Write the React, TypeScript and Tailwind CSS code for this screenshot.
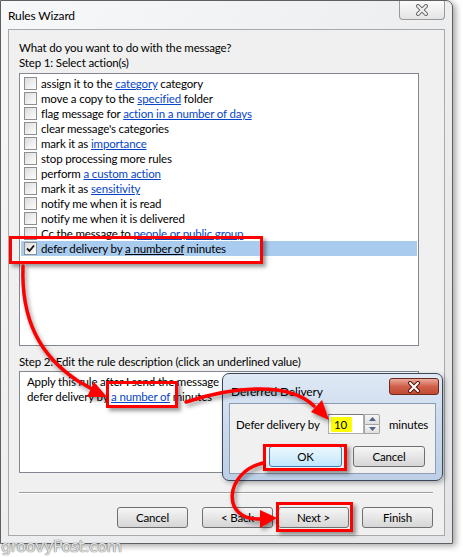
import React from 'react';

type Action = { pre: string; link?: string; post?: string; checked?: boolean };

const actions: Action[] = [
  { pre: 'assign it to the ', link: 'category', post: ' category' },
  { pre: 'move a copy to the ', link: 'specified', post: ' folder' },
  { pre: 'flag message for ', link: 'action in a number of days' },
  { pre: "clear message's categories" },
  { pre: 'mark it as ', link: 'importance' },
  { pre: 'stop processing more rules' },
  { pre: 'perform ', link: 'a custom action' },
  { pre: 'mark it as ', link: 'sensitivity' },
  { pre: 'notify me when it is read' },
  { pre: 'notify me when it is delivered' },
  { pre: 'Cc the message to ', link: 'people or public group' },
  { pre: 'defer delivery by ', link: 'a number of', post: ' minutes', checked: true },
];

function Checkbox({ checked }: { checked?: boolean }) {
  return (
    <span className="w-[13px] h-[13px] shrink-0 border border-[#8e8f8f] bg-gradient-to-br from-[#dcdcdc] to-white flex items-center justify-center">
      {checked && (
        <svg width="9" height="9" viewBox="0 0 9 9">
          <path d="M1 4.5 L3.5 7 L8 1.5" fill="none" stroke="#111" strokeWidth="1.8" />
        </svg>
      )}
    </span>
  );
}

function CloseGlyph({ light }: { light?: boolean }) {
  return (
    <svg width="14" height="12" viewBox="0 0 14 12">
      <path d="M3 2 L11 10 M11 2 L3 10" stroke={light ? '#5a1a10' : '#6e6e6e'} strokeWidth="4" strokeLinecap="round" />
      <path d="M3 2 L11 10 M11 2 L3 10" stroke={light ? '#ffffff' : '#f4f4f4'} strokeWidth="2" strokeLinecap="round" />
    </svg>
  );
}

function Button({ label, className = '' }: { label: string; className?: string }) {
  return (
    <div
      className={`h-[21px] w-[71px] rounded-[3px] border border-[#707070] bg-gradient-to-b from-[#f6f6f6] via-[#e6e6e6] to-[#d6d6d6] flex items-center justify-center text-black ${className}`}
    >
      {label}
    </div>
  );
}

function RedBox({ className }: { className: string }) {
  return (
    <div className={`absolute border-[3px] border-[#ff0000] shadow-[3px_3px_4px_rgba(0,0,0,0.4)] ${className}`} />
  );
}

export default function App() {
  return (
    <div className="relative w-[463px] h-[557px] bg-white overflow-hidden font-['Lato',sans-serif] text-[11.5px] tracking-[-0.15px] leading-[15px] text-black">
      {/* main window */}
      <div className="w-[453px] h-[544px] flex flex-col rounded-tr-[7px] border border-[#5f5f5f] bg-gradient-to-br from-[#f7f8f9] via-[#eceef0] to-[#e2e4e7] shadow-[3px_2px_6px_rgba(0,0,0,0.35)]">
        <div className="h-[28px] flex justify-between items-start">
          <span className="pl-[7px] pt-[7px] text-[12px]">Rules Wizard</span>
          <div className="mr-[7px] w-[46px] h-[19px] rounded-b-[4px] border border-t-0 border-[#9a9a9a] bg-gradient-to-b from-[#fbfbfb] to-[#e4e4e4] flex items-center justify-center">
            <CloseGlyph />
          </div>
        </div>

        <div className="mx-[7px] mb-[7px] flex-1 border border-[#a9a9a9] bg-[#f0f0f0] pl-[10px] pr-[11px] pt-[10px] flex flex-col">
          <div>What do you want to do with the message?</div>
          <div>Step 1: Select action(s)</div>

          <div className="mt-[3px] w-[400px] h-[273px] border border-[#828790] bg-white pt-[2px] px-[1px]">
            {actions.map((a, i) => (
              <div
                key={i}
                className={`h-[15px] flex items-center gap-[4px] pl-[3px] whitespace-nowrap ${a.checked ? 'bg-[#a9cbee]' : ''}`}
              >
                <Checkbox checked={a.checked} />
                <span>
                  {a.pre}
                  {a.link && (
                    <span className={a.checked ? 'underline text-black' : 'underline text-[#0645c8]'}>{a.link}</span>
                  )}
                  {a.post}
                </span>
              </div>
            ))}
          </div>

          <div className="mt-[8px]">Step 2: Edit the rule description (click an underlined value)</div>
          <div className="mt-[2px] w-[400px] h-[102px] border border-[#828790] bg-white pl-[7px] pt-[2px]">
            <div>Apply this rule after I send the message</div>
            <div>
              defer delivery by <span className="underline text-[#0645c8]">a number of</span> minutes
            </div>
          </div>

          <div className="mt-[19px] w-[414px] h-[2px] border-t border-[#a0a0a0] border-b border-b-white" />

          <div className="mt-[13px] flex">
            <Button label="Cancel" className="ml-[98px]" />
            <Button label="< Back" className="ml-[14px]" />
            <Button label="Next >" className="ml-[5px]" />
            <Button label="Finish" className="ml-[13px]" />
          </div>
        </div>
      </div>

      {/* watermark */}
      <div className="absolute left-[1px] top-[538px] font-['DejaVu_Sans',sans-serif] text-[16px] leading-[18px] tracking-[-0.5px] text-[#e0e0e0] [text-shadow:0_0_1px_#707070,0_0_1px_#707070]">
        groovyPost.com
      </div>

      {/* Deferred Delivery dialog */}
      <div className="absolute left-[222px] top-[373px] w-[221px] h-[108px] rounded-[7px] border border-[#39475a] bg-gradient-to-b from-[#dfe9f5] via-[#cad9ec] to-[#bccfe6] shadow-[2px_2px_5px_rgba(0,0,0,0.3)] flex flex-col">
        <div className="h-[29px] flex justify-between items-start">
          <span className="pl-[8px] pt-[10px] text-[12px]">Deferred Delivery</span>
          <div className="mt-[4px] mr-[3px] w-[50px] h-[17px] rounded-[3px] border border-[#6b2a1c] bg-gradient-to-b from-[#e9a99a] via-[#d0604b] to-[#c24a30] flex items-center justify-center">
            <CloseGlyph light />
          </div>
        </div>
        <div className="mx-[6px] mb-[6px] flex-1 border border-[#8b9cb4] bg-[#f0f0f0] pt-[10px] flex flex-col">
          <div className="flex items-center pl-[6px] whitespace-nowrap">
            <span className="w-[92px]">Defer delivery by</span>
            <div className="w-[36px] h-[20px] border border-[#abadb3] border-t-[#7a7a7a] bg-white flex items-center pl-[2px]">
              <span className="bg-[#ffff00] px-[3px] leading-[15px] w-[21px]">10</span>
            </div>
            <div className="w-[16px] h-[20px] flex flex-col">
              <div className="flex-1 border border-[#a3a3a3] rounded-tr-[2px] bg-gradient-to-b from-[#f6f6f6] to-[#dedede] flex items-center justify-center">
                <svg width="7" height="4" viewBox="0 0 7 4"><path d="M0 4 L3.5 0 L7 4Z" fill="#4d6185" /></svg>
              </div>
              <div className="flex-1 border border-t-0 border-[#a3a3a3] rounded-br-[2px] bg-gradient-to-b from-[#f6f6f6] to-[#dedede] flex items-center justify-center">
                <svg width="7" height="4" viewBox="0 0 7 4"><path d="M0 0 L3.5 4 L7 0Z" fill="#4d6185" /></svg>
              </div>
            </div>
            <span className="ml-[9px]">minutes</span>
          </div>
          <div className="mt-[12px] flex pl-[39px]">
            <div className="h-[21px] w-[73px] rounded-[3px] border border-[#3c7fb1] bg-gradient-to-b from-[#eaf6fd] via-[#d9f0fc] to-[#bee6fd] flex items-center justify-center">
              OK
            </div>
            <div className="ml-[11px] h-[21px] w-[72px] rounded-[3px] border border-[#707070] bg-gradient-to-b from-[#f6f6f6] via-[#e6e6e6] to-[#d6d6d6] flex items-center justify-center">
              Cancel
            </div>
          </div>
        </div>
      </div>

      {/* annotation boxes */}
      <RedBox className="left-[9px] top-[236px] w-[254px] h-[28px]" />
      <RedBox className="left-[106px] top-[381px] w-[72px] h-[27px]" />
      <RedBox className="left-[263px] top-[444px] w-[84px] h-[27px]" />
      <RedBox className="left-[276px] top-[502px] w-[77px] h-[30px]" />

      {/* annotation arrows */}
      <svg
        className="absolute left-0 top-0 pointer-events-none [filter:drop-shadow(2px_3px_2px_rgba(0,0,0,0.4))]"
        width="463"
        height="557"
        viewBox="0 0 463 557"
      >
        <g fill="none" stroke="#ff0000" strokeWidth="3.5" strokeLinecap="round">
          <path d="M23 266 C21 320 40 356 78 381 L92 389" />
          <path d="M186 402 C228 388 288 380 314 406" />
          <path d="M263 463 C224 472 221 521 260 519" />
        </g>
        <g fill="#ff0000">
          <polygon points="107,397 94,382 87,397" />
          <polygon points="329,420 311,412 322,400" />
          <polygon points="277,518 260,510 260,528" />
        </g>
      </svg>
    </div>
  );
}
